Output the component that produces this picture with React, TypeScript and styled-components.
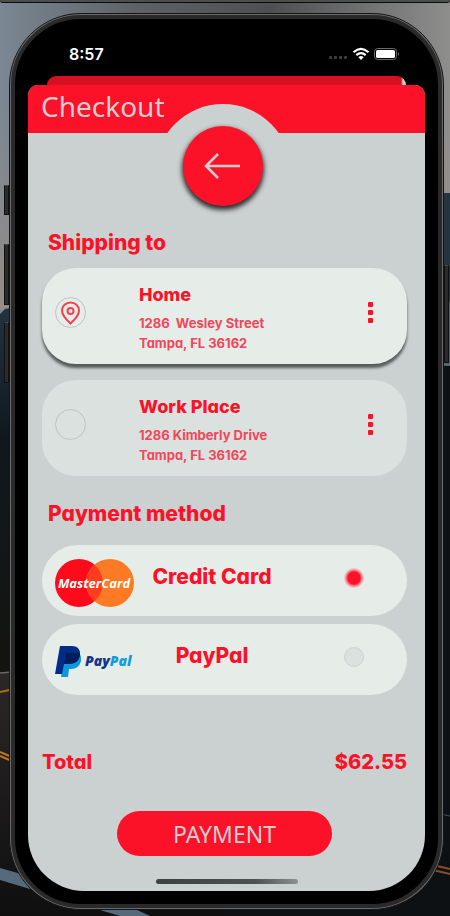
import React, { useState } from "react";
import styled, { createGlobalStyle, css } from "styled-components";

const red = "#fb1228";
const surface = "#cbd1d1";
const card = "#e6ece8";
const cardMuted = "#dbe1df";
const pale = "#dacdd0";

const GlobalStyle = createGlobalStyle`
  *, *::before, *::after { box-sizing: border-box; }
  body { margin: 0; background: #16181a; font-family: Inter, "Open Sans", sans-serif; }
  button, input { font: inherit; margin: 0; padding: 0; }
  h1, h2, h3, p { margin: 0; }
`;

const Page = styled.div`
  position: relative;
  display: flex;
  flex-direction: column;
  min-height: 100vh;
  overflow: hidden;
`;

const Scenery = styled.svg`
  position: absolute;
  inset: 0;
  width: 100%;
  height: 100%;
`;

const WindowEdge = styled.div`
  position: relative;
  height: 3px;
  background: #4c4e4d;
  border-bottom: 1px solid #0a0b0b;
  border-radius: 0 0 5px 5px;
`;

const Phone = styled.div`
  position: relative;
  flex: 1;
  display: flex;
  flex-direction: column;
  margin: 10px 6px 6px 9px;
  border: 1px solid #141414;
  border-radius: 72px;
  background: #6a6a6a;
  padding: 1px;
`;

const Frame = styled.div`
  flex: 1;
  display: flex;
  flex-direction: column;
  border: 4px solid #2a2a2a;
  border-radius: 70px;
  background: #000;
  padding: 13px;
`;

const SideKey = styled.span<{ $side: "left" | "right"; $top: number; $length: number }>`
  position: absolute;
  top: ${(p) => p.$top}px;
  ${(p) => p.$side}: -6px;
  width: 5px;
  height: ${(p) => p.$length}px;
  background: #2b2b2b;
  border: 1px solid #101010;
  border-top-color: #4a4a4a;
`;

const StatusBar = styled.div`
  display: flex;
  align-items: center;
  justify-content: space-between;
  height: 44px;
  padding: 0 25px 0 41px;
  color: #fff;
`;

const Clock = styled.span`
  font-size: 16px;
  font-weight: 600;
  line-height: 20px;
`;

const StatusIcons = styled.svg`
  width: 72px;
  height: 16px;
`;

const SheetBehind = styled.div`
  height: 9px;
  margin: 0 19px;
  border-radius: 9px 9px 0 0;
  background: linear-gradient(to right, #d61021 calc(100% - 5px), #c9cdcc calc(100% - 3px));
`;

const Sheet = styled.main`
  flex: 1;
  display: flex;
  flex-direction: column;
  border-radius: 10px 10px 56px 56px;
  background: ${surface};
  overflow: hidden;
`;

const Header = styled.header`
  position: relative;
  height: 48px;
  padding: 3px 13px;
  background: ${red};
`;

const Title = styled.h1`
  font-family: "Noto Sans", "Open Sans", sans-serif;
  font-size: 28px;
  font-weight: 400;
  line-height: 36px;
  color: ${pale};
`;

const Notch = styled.div`
  position: absolute;
  top: 19px;
  left: calc(50% - 72px);
  display: flex;
  justify-content: center;
  align-items: flex-start;
  width: 136px;
  height: 136px;
  padding-top: 22px;
  border-radius: 50%;
  background: ${surface};
`;

const BackButton = styled.button`
  display: grid;
  place-items: center;
  width: 80px;
  height: 80px;
  border: 0;
  border-radius: 50%;
  background: ${red};
  box-shadow: 0 3px 5px 1px #2b2b2b;
  cursor: pointer;
`;

const Content = styled.form`
  flex: 1;
  display: flex;
  flex-direction: column;
  padding: 97px 18px 0 14px;
  color: ${red};
`;

const Section = styled.section`
  display: flex;
  flex-direction: column;
`;

const Heading = styled.h2`
  padding-left: 6px;
  font-size: 21px;
  font-weight: 800;
  line-height: 26px;
  font-feature-settings: "cv11";
`;

const AddressList = styled.div`
  display: flex;
  flex-direction: column;
  gap: 16px;
  margin: 12px 0 25px;
`;

const AddressCard = styled.div<{ $active: boolean }>`
  display: flex;
  align-items: center;
  min-height: 96px;
  padding: 0 30px 7px 13px;
  border-radius: 34px;
  background: ${(p) => (p.$active ? card : cardMuted)};
  ${(p) =>
    p.$active &&
    css`
      box-shadow: 0 4px 3px 0 #555a5b;
    `}
`;

const AddressLabel = styled.label`
  flex: 1;
  display: flex;
  align-items: center;
  gap: 53px;
  cursor: pointer;
`;

const PinSlot = styled.span`
  position: relative;
  display: grid;
  width: 31px;
  height: 31px;
`;

const PinRadio = styled.input`
  appearance: none;
  width: 31px;
  height: 31px;
  border: 1px solid #bcc4c6;
  border-radius: 50%;
  cursor: pointer;
`;

const Pin = styled.svg`
  position: absolute;
  inset: 4px 5px;
  width: 21px;
  height: 24px;
  pointer-events: none;
`;

const AddressText = styled.span`
  display: flex;
  flex-direction: column;
  padding-top: 10px;
  font-feature-settings: "cv11";
`;

const AddressName = styled.strong`
  margin-bottom: 6px;
  font-size: 18px;
  font-weight: 800;
  line-height: 24px;
`;

const AddressLine = styled.span`
  font-size: 13px;
  font-weight: 700;
  line-height: 20px;
  white-space: pre;
  color: #f0475a;
`;

const MenuButton = styled.button`
  display: flex;
  flex-direction: column;
  align-items: center;
  gap: 3px;
  width: 13px;
  border: 0;
  background: none;
  cursor: pointer;
`;

const Dot = styled.span`
  width: 5px;
  height: 5px;
  border-radius: 1px;
  background: ${red};
`;

const MethodList = styled.div`
  display: flex;
  flex-direction: column;
  gap: 8px;
  margin-top: 18px;
`;

const MethodCard = styled.label`
  display: flex;
  align-items: center;
  height: 71px;
  padding: 0 43px 6px 13px;
  border-radius: 36px;
  background: ${card};
  cursor: pointer;
`;

const Logo = styled.svg`
  flex: none;
  align-self: flex-end;
  width: 79px;
  height: 54px;
`;

const MethodName = styled.span`
  flex: 0 1 156px;
  padding-bottom: 2px;
  text-align: center;
  font-size: 21px;
  font-weight: 800;
  line-height: 26px;
  font-feature-settings: "cv11";
`;

const MethodRadio = styled.input`
  appearance: none;
  width: 20px;
  height: 20px;
  margin-left: auto;
  border: 1px solid #ccd2d1;
  border-radius: 50%;
  background: ${cardMuted};
  cursor: pointer;

  &:checked {
    border-color: #f2c3c6;
    background: radial-gradient(circle, ${red} 6px, #ef8c95 8px, #f0b9bd 10px);
  }
`;

const TotalRow = styled.div`
  display: flex;
  justify-content: space-between;
  margin: 54px 0 36px;
  font-size: 20px;
  font-weight: 800;
  line-height: 26px;
  font-feature-settings: "cv11";
`;

const PayButton = styled.button`
  align-self: center;
  width: 59%;
  height: 45px;
  border: 0;
  border-radius: 23px;
  background: ${red};
  color: ${pale};
  font-family: "Noto Sans", "Open Sans", sans-serif;
  font-size: 23px;
  font-weight: 400;
  line-height: 32px;
  cursor: pointer;
`;

const HomeIndicator = styled.div`
  align-self: center;
  width: 142px;
  height: 5px;
  margin-bottom: 7px;
  border-radius: 3px;
  background: linear-gradient(to right, #3c4142, #4c5152 70%, #8b9091);
`;

const addresses = [
  { id: "home", name: "Home", lines: ["1286  Wesley Street", "Tampa, FL 36162"] },
  { id: "work", name: "Work Place", lines: ["1286 Kimberly Drive", "Tampa, FL 36162"] },
];

function Landscape() {
  return (
    <Scenery viewBox="0 0 450 916" preserveAspectRatio="none" aria-hidden="true">
      <defs>
        <linearGradient id="sky" x1="0" x2="1" y1="0" y2="0">
          <stop offset="0" stopColor="#7b8793" />
          <stop offset="0.3" stopColor="#5d6267" />
          <stop offset="0.6" stopColor="#4e4f52" />
          <stop offset="1" stopColor="#8e8e8d" />
        </linearGradient>
        <linearGradient id="dusk" x1="0" x2="0" y1="0" y2="1">
          <stop offset="0" stopColor="#9b8e85" stopOpacity="0" />
          <stop offset="1" stopColor="#9b8e85" stopOpacity="0.8" />
        </linearGradient>
        <linearGradient id="hills" x1="0" x2="0" y1="0" y2="1">
          <stop offset="0" stopColor="#2b4152" />
          <stop offset="0.45" stopColor="#10181e" />
          <stop offset="1" stopColor="#14140f" />
        </linearGradient>
        <linearGradient id="road" x1="0" x2="0" y1="0" y2="1">
          <stop offset="0" stopColor="#2b2726" />
          <stop offset="1" stopColor="#0f0f10" />
        </linearGradient>
      </defs>
      <rect width="450" height="400" fill="url(#sky)" />
      <rect y="100" width="450" height="210" fill="url(#dusk)" />
      <path d="M0 314 L5 309 L20 306 L225 240 L225 680 L0 680Z" fill="url(#hills)" />
      <path d="M225 193H450V680H225Z" fill="#243541" />
      <path d="M444 320L450 300V366H444Z" fill="#54686b" />
      <path d="M225 366H450V916H225Z" fill="#0d1114" />
      <path d="M0 673H225V916H0Z" fill="url(#road)" />
      <path d="M0 673L12 672" stroke="#68686a" strokeWidth="1.5" />
      <path d="M0 692L14 689" stroke="#a86d18" strokeWidth="2" />
      <path d="M0 752L14 758M0 756L14 762" stroke="#bd7a17" strokeWidth="2" />
      <path d="M0 868L120 902L150 916H120L0 880Z" fill="#566a7b" />
      <path d="M430 812L450 816" stroke="#3c5261" strokeWidth="1" />
      <path d="M420 862L450 869M420 867L450 874" stroke="#8a5020" strokeWidth="2" />
    </Scenery>
  );
}

function MasterCardLogo() {
  return (
    <Logo viewBox="0 0 79 54" aria-hidden="true">
      <circle cx="24" cy="27" r="24" fill="#ff0a1b" />
      <circle cx="55" cy="27" r="24" fill="#ff7a24" />
      <path d="M39.5 8.7A24 24 0 0 1 39.5 45.3A24 24 0 0 1 39.5 8.7Z" fill="#ff3c1e" />
      <text
        x="39"
        y="32"
        textAnchor="middle"
        fill="#fff"
        fontFamily="Open Sans, sans-serif"
        fontSize="13"
        fontStyle="italic"
        fontWeight="700"
      >
        MasterCard
      </text>
    </Logo>
  );
}

function PayPalLogo() {
  return (
    <Logo viewBox="0 0 79 54" aria-hidden="true">
      <path d="M10 17H21Q27 18 26 26Q24 34 16 34H14L13 42H6Z" fill="#0b98dc" />
      <path d="M5 11H17Q25 11 25 19Q24 29 13 29H9L7 39H0Z" fill="#012d86" />
      <path d="M11 18H25Q25 29 13 29H9Z" fill="#011d5c" />
      <text
        x="30"
        y="31"
        fontFamily="Open Sans, sans-serif"
        fontSize="14"
        fontStyle="italic"
        fontWeight="800"
      >
        <tspan fill="#12368a">Pay</tspan>
        <tspan fill="#169bd9">Pal</tspan>
      </text>
    </Logo>
  );
}

const methods = [
  { id: "card", name: "Credit Card", Mark: MasterCardLogo },
  { id: "paypal", name: "PayPal", Mark: PayPalLogo },
];

export default function App() {
  const [address, setAddress] = useState("home");
  const [method, setMethod] = useState("card");

  return (
    <Page>
      <GlobalStyle />
      <Landscape />
      <WindowEdge />
      <Phone>
        <SideKey $side="left" $top={171} $length={30} />
        <SideKey $side="left" $top={230} $length={61} />
        <SideKey $side="left" $top={308} $length={61} />
        <SideKey $side="right" $top={251} $length={98} />
        <Frame>
          <StatusBar>
            <Clock>8:57</Clock>
            <StatusIcons viewBox="0 0 72 16" aria-hidden="true">
              <g fill="#3e3e3e">
                <rect x="1" y="10" width="3" height="3" rx="1" />
                <rect x="6" y="10" width="3" height="3" rx="1" />
                <rect x="11" y="10" width="3" height="3" rx="1" />
                <rect x="16" y="10" width="3" height="3" rx="1" />
              </g>
              <g fill="none" stroke="#fff" strokeWidth="2.2">
                <path d="M25.5 6.2Q33 -0.5 40.5 6.2" />
                <path d="M28.3 9.1Q33 5 37.7 9.1" />
              </g>
              <path d="M30.4 11.2Q33 9 35.6 11.2L33 14Z" fill="#fff" />
              <rect x="46.5" y="2.5" width="22" height="11" rx="3" fill="none" stroke="#6b6b6b" />
              <rect x="48" y="4" width="19" height="8" rx="1.5" fill="#fff" />
              <path d="M70 6Q72 8 70 10Z" fill="#6b6b6b" />
            </StatusIcons>
          </StatusBar>
          <SheetBehind />
          <Sheet>
            <Header>
              <Title>Checkout</Title>
              <Notch>
                <BackButton type="button" aria-label="Back">
                  <svg width="38" height="28" viewBox="0 0 38 28" fill="none" stroke={pale} strokeWidth="2.6">
                    <path d="M36 14H2M14 2L2 14L14 26" />
                  </svg>
                </BackButton>
              </Notch>
            </Header>
            <Content onSubmit={(e) => e.preventDefault()}>
              <Section>
                <Heading>Shipping to</Heading>
                <AddressList>
                  {addresses.map((a) => (
                    <AddressCard key={a.id} $active={a.id === address}>
                      <AddressLabel>
                        <PinSlot>
                          <PinRadio
                            type="radio"
                            name="address"
                            checked={a.id === address}
                            onChange={() => setAddress(a.id)}
                          />
                          {a.id === address && (
                            <Pin viewBox="0 0 21 24" fill="none" stroke="#f2404f" strokeWidth="2">
                              <path d="M10.5 22.5C5.5 18 2 14 2 9.5C2 4.8 5.8 1.5 10.5 1.5S19 4.8 19 9.5C19 14 15.5 18 10.5 22.5Z" />
                              <circle cx="10.5" cy="10" r="3" />
                            </Pin>
                          )}
                        </PinSlot>
                        <AddressText>
                          <AddressName>{a.name}</AddressName>
                          {a.lines.map((line) => (
                            <AddressLine key={line}>{line}</AddressLine>
                          ))}
                        </AddressText>
                      </AddressLabel>
                      <MenuButton type="button" aria-label={`${a.name} options`}>
                        <Dot />
                        <Dot />
                        <Dot />
                      </MenuButton>
                    </AddressCard>
                  ))}
                </AddressList>
              </Section>
              <Section>
                <Heading>Payment method</Heading>
                <MethodList>
                  {methods.map(({ id, name, Mark }) => (
                    <MethodCard key={id}>
                      <Mark />
                      <MethodName>{name}</MethodName>
                      <MethodRadio
                        type="radio"
                        name="method"
                        checked={id === method}
                        onChange={() => setMethod(id)}
                      />
                    </MethodCard>
                  ))}
                </MethodList>
              </Section>
              <TotalRow>
                <span>Total</span>
                <span>$62.55</span>
              </TotalRow>
              <PayButton type="submit">PAYMENT</PayButton>
            </Content>
            <HomeIndicator />
          </Sheet>
        </Frame>
      </Phone>
    </Page>
  );
}
